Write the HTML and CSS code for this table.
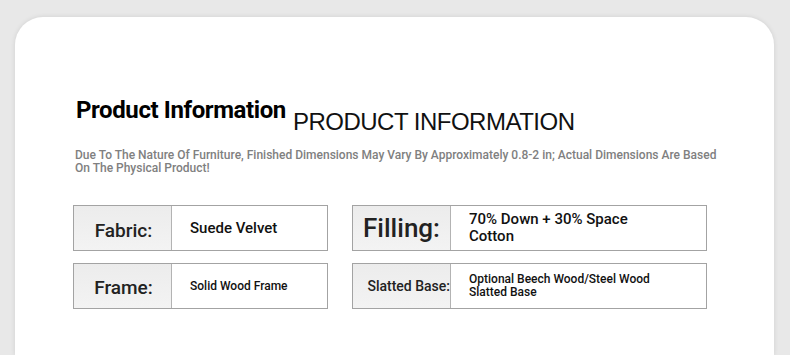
FILE: index.html
```html
<!DOCTYPE html>
<html>
<head>
<meta charset="utf-8">
<link rel="stylesheet" href="styles.css">
</head>
<body>
<div class="card">
  <div class="head">
    <div class="titles">
      <span class="title-main">Product Information</span>
      <span class="title-en">PRODUCT INFORMATION</span>
    </div>
    <p class="note">Due To The Nature Of Furniture, Finished Dimensions May Vary By Approximately 0.8-2 in; Actual Dimensions Are Based On The Physical Product!</p>
  </div>
  <div class="grid">
    <div class="spec spec-left">
      <div class="label l-fabric">Fabric:</div>
      <div class="value v-big">Suede Velvet</div>
    </div>
    <div class="spec spec-right">
      <div class="label l-filling">Filling:</div>
      <div class="value v-big">70% Down + 30% Space Cotton</div>
    </div>
    <div class="spec spec-left">
      <div class="label l-frame">Frame:</div>
      <div class="value v-small">Solid Wood Frame</div>
    </div>
    <div class="spec spec-right">
      <div class="label l-slatted">Slatted Base:</div>
      <div class="value v-small">Optional Beech Wood/Steel Wood Slatted Base</div>
    </div>
  </div>
</div>
</body>
</html>
```

FILE: styles.css
```css
html, body {
  margin: 0;
  padding: 0;
  overflow: hidden;
}
body {
  background: #e8e8e8;
  padding: 17px 16px 0 15px;
  font-family: Roboto, "Liberation Sans", sans-serif;
  height: 355px;
  box-sizing: border-box;
}
.card {
  background: #ffffff;
  border-radius: 28px 28px 0 0;
  box-shadow: 0 0 5px rgba(0, 0, 0, 0.10);
  height: 338px;
  padding: 82px 0 0 58px;
  box-sizing: border-box;
}
.head {
  width: 656px;
}
.titles {
  display: flex;
  align-items: flex-end;
  gap: 7px;
  padding-left: 3px;
  height: 36px;
}
.title-main {
  font-weight: 700;
  font-size: 24px;
  letter-spacing: -0.4px;
  color: #000;
  line-height: 30px;
  margin-bottom: 10px;
}
.title-en {
  font-family: "Liberation Sans", Arial, sans-serif;
  font-size: 24px;
  color: #111;
  letter-spacing: -0.5px;
  line-height: 26px;
}
.note {
  margin: 14px 0 0 2px;
  font-size: 12px;
  line-height: 13px;
  font-weight: 500;
  color: #808080;
}
.grid {
  display: grid;
  grid-template-columns: 255px 355px;
  column-gap: 24px;
  row-gap: 12px;
  margin-top: 30px;
}
.spec {
  display: flex;
  height: 46px;
  border: 1px solid #a3a3a3;
  box-sizing: border-box;
  background: #fff;
}
.label {
  background: linear-gradient(#ececec, #f3f3f3);
  border-right: 1px solid #b3b3b3;
  display: flex;
  align-items: center;
  justify-content: center;
  color: #222;
  flex: none;
  font-weight: 500;
}
.spec-left .label { width: 95px; }
.spec-right .label { width: 97px; }
.l-fabric { font-size: 19px; padding-top: 4px; padding-left: 2px; }
.l-filling { font-size: 26px; }
.l-frame { font-size: 19px; padding-top: 2px; padding-left: 2px; }
.l-slatted { font-size: 14px; justify-content: flex-end; padding-right: 0; }
.value {
  display: flex;
  align-items: center;
  color: #111;
  padding-left: 18px;
  padding-right: 20px;
}
.spec-left .value { padding-left: 18px; }
.v-big {
  font-size: 15px;
  font-weight: 500;
  line-height: 17px;
}
.spec-right .v-big { padding-right: 60px; }
.v-small {
  font-size: 12px;
  line-height: 13px;
  font-weight: 500;
}
.spec-right .v-small { padding-right: 50px; }
```
